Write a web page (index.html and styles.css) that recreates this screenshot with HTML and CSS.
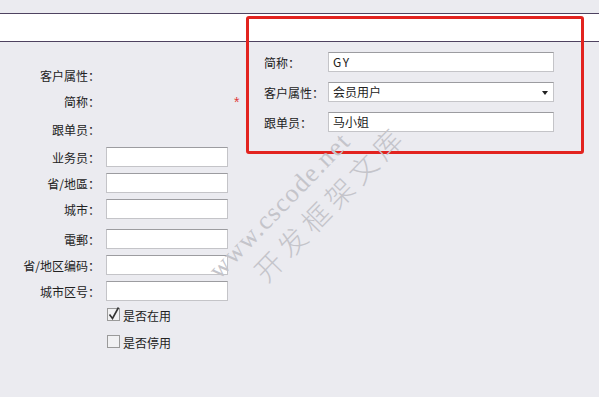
FILE: index.html
```html
<!DOCTYPE html>
<html lang="zh-CN">
<head>
    <meta charset="UTF-8">
    <title>客户资料</title>
    <link rel="stylesheet" href="styles.css">
</head>
<body>
    <div class="topbar"></div>
    <div class="band"></div>

    <div class="main">
        <div class="col-left">
            <div class="row">
                <span class="label">客户属性：</span>
            </div>
            <div class="row">
                <span class="label">简称：</span>
                <span class="required">*</span>
            </div>
            <div class="row gap-8">
                <span class="label">跟单员：</span>
            </div>
            <div class="row gap-8">
                <span class="label">业务员：</span>
                <input type="text" class="field">
            </div>
            <div class="row">
                <span class="label">省/地區：</span>
                <input type="text" class="field">
            </div>
            <div class="row">
                <span class="label">城市：</span>
                <input type="text" class="field">
            </div>
            <div class="row gap-10">
                <span class="label">電郵：</span>
                <input type="text" class="field">
            </div>
            <div class="row">
                <span class="label">省/地区编码：</span>
                <input type="text" class="field">
            </div>
            <div class="row">
                <span class="label">城市区号：</span>
                <input type="text" class="field">
            </div>
            <div class="row gap-4">
                <span class="label"></span>
                <label class="check">
                    <svg width="13" height="14" viewBox="0 0 13 14">
                        <rect x="0.5" y="1.5" width="12" height="12" fill="#f1f1f3" stroke="#9a9a9a"/>
                        <path d="M2.5 7.5 L5.5 11.5 L11.5 0.5" fill="none" stroke="#333" stroke-width="1.6"/>
                    </svg>
                    是否在用
                </label>
            </div>
            <div class="row gap-7">
                <span class="label"></span>
                <label class="check">
                    <svg width="13" height="14" viewBox="0 0 13 14">
                        <rect x="0.5" y="1.5" width="12" height="12" fill="#f1f1f3" stroke="#9a9a9a"/>
                    </svg>
                    是否停用
                </label>
            </div>
        </div>

        <div class="col-right">
            <div class="row row-wide">
                <span class="label-r">简称：</span>
                <div class="field field-wide mono">GY</div>
            </div>
            <div class="row row-wide">
                <span class="label-r">客户属性：</span>
                <div class="field field-wide select">
                    会员用户
                    <span class="arrow"></span>
                </div>
            </div>
            <div class="row row-wide">
                <span class="label-r">跟单员：</span>
                <div class="field field-wide">马小姐</div>
            </div>
        </div>
    </div>

    <!-- annotation box over the right fields -->
    <div class="highlight"></div>

    <div class="watermark">
        <div class="wm-url">www.cscode.net</div>
        <div class="wm-name">开发框架文库</div>
    </div>
</body>
</html>
```

FILE: styles.css
```css
* {
    margin: 0;
    padding: 0;
    box-sizing: border-box;
}

body {
    background: #ebebf0;
    font-family: "Noto Sans CJK SC", "Noto Sans", sans-serif;
    font-size: 12px;
    color: #222;
    width: 599px;
    height: 397px;
    overflow: hidden;
    position: relative;
}

.topbar {
    height: 13px;
}

.band {
    height: 29px;
    background: #fff;
    border-top: 1px solid #4e4260;
    border-bottom: 1px solid #4e4260;
}

.main {
    display: flex;
}

.col-left {
    width: 264px;
    padding-top: 23px;
    display: flex;
    flex-direction: column;
}

.row {
    display: flex;
    align-items: center;
    height: 20px;
}

.col-left .row + .row {
    margin-top: 6px;
}

.col-left .row.gap-4 { margin-top: 4px; }
.col-left .row.gap-7 { margin-top: 7px; }
.col-left .row.gap-8 { margin-top: 8px; }
.col-left .row.gap-10 { margin-top: 10px; }

.label {
    width: 100px;
    text-align: right;
    white-space: nowrap;
    flex-shrink: 0;
}

.required {
    color: #e03a3a;
    margin-left: 134px;
    margin-top: 2px;
    font-size: 14px;
    font-family: "Liberation Sans", sans-serif;
}

.field {
    margin-left: 6px;
    width: 122px;
    height: 20px;
    background: #fff;
    border: 1px solid #c4c4c8;
    border-top-color: #9c9ca0;
    font: inherit;
    color: #222;
}

.check {
    display: flex;
    align-items: center;
    gap: 3px;
    margin-left: 7px;
    font-size: 12px;
}

.check svg {
    display: block;
    margin-top: -2px;
}

.col-right {
    padding-top: 10px;
    display: flex;
    flex-direction: column;
    gap: 10px;
}

.label-r {
    width: 64px;
    white-space: nowrap;
}

.field-wide {
    margin-left: 0;
    width: 226px;
    padding: 0 4px;
    line-height: 18px;
    position: relative;
}

.mono {
    letter-spacing: 1.5px;
}

.select .arrow {
    position: absolute;
    right: 5px;
    top: 8px;
    border-left: 3px solid transparent;
    border-right: 3px solid transparent;
    border-top: 4px solid #222;
}

.highlight {
    position: absolute;
    left: 246px;
    top: 16px;
    width: 338px;
    height: 138px;
    border: 3px solid #e2231f;
    border-radius: 3px;
}

.watermark {
    position: absolute;
    left: 190px;
    top: 172px;
    transform: rotate(-46deg);
    color: #c4c4ca;
    font-family: "Liberation Serif", serif;
    line-height: 1;
    pointer-events: none;
}

.wm-url {
    font-size: 26px;
    letter-spacing: 1.5px;
}

.wm-name {
    font-family: "Noto Sans CJK SC", sans-serif;
    font-size: 28px;
    font-weight: 300;
    margin-top: 6px;
    margin-left: 30px;
    letter-spacing: 6px;
}
```
